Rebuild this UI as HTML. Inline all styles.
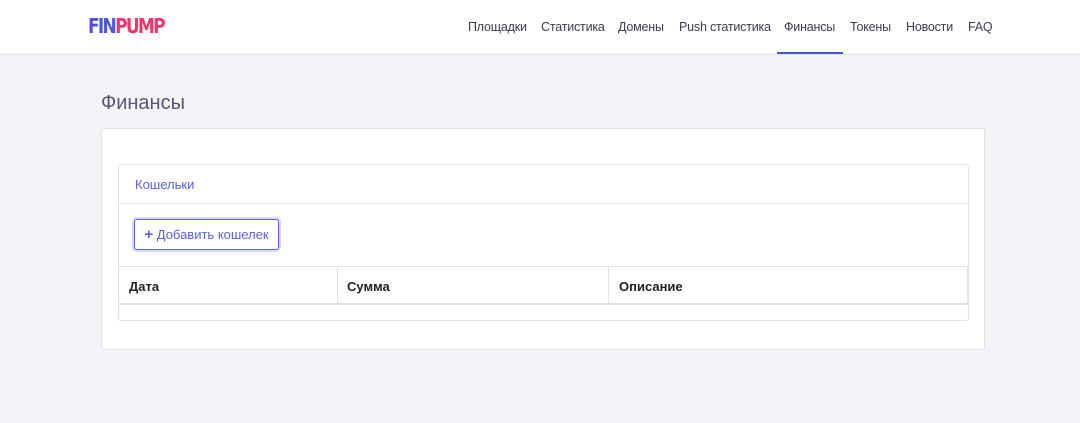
<!DOCTYPE html><html><head><meta charset="utf-8"><style>
body{margin:0;width:1080px;height:423px;background:#f3f4f8;font-family:"Liberation Sans",sans-serif;position:relative;overflow:hidden}
.hdr{position:absolute;left:0;top:0;width:1080px;height:54px;background:#fff;border-bottom:1px solid #e2e3e8}
.logo{position:absolute;left:88px;top:14px;font-weight:900;font-size:20px;letter-spacing:-2px;font-family:"DejaVu Sans",sans-serif;transform:scaleX(0.85);transform-origin:left}
.nav span{position:absolute;top:20px;font-size:12.5px;color:#3c3c55;letter-spacing:-0.2px}
.ul{position:absolute;left:777px;top:52px;width:66px;height:2px;background:#4a55c8}
h1{position:absolute;left:101px;top:92px;margin:0;font-size:20px;font-weight:normal;color:#57557a}
.card{position:absolute;background:#fff;border:1px solid #e1e2e6;border-radius:3px;box-sizing:border-box}
.abs{position:absolute}
</style></head><body>
<div class="hdr">
<div class="logo"><span style="color:#4b55d8">FIN</span><span style="color:#f0346c">PUMP</span></div>
<div class="nav">
<span style="left:468px">Площадки</span><span style="left:541px">Статистика</span><span style="left:618px">Домены</span><span style="left:679px">Push статистика</span><span style="left:784px">Финансы</span><span style="left:850px">Токены</span><span style="left:906px">Новости</span><span style="left:968px">FAQ</span>
</div><div class="ul"></div></div>
<h1>Финансы</h1>
<div class="card" style="left:101px;top:128px;width:884px;height:222px"></div>
<div class="card" style="left:118px;top:164px;width:851px;height:157px"></div>
<div class="abs" style="left:119px;top:203px;width:849px;height:1px;background:#e4e5ea"></div>
<div class="abs" style="left:135px;top:177px;font-size:13px;color:#5a5fd6">Кошельки</div>
<div class="abs" style="left:134px;top:219px;width:145px;height:31px;box-sizing:border-box;border:1px solid #5a62e0;border-radius:3px;box-shadow:0 0 0 2px #d6d9fb;font-size:13px;color:#5a5fd6;line-height:29px;text-align:center"><b style="font-size:15px">+</b> Добавить кошелек</div>
<div class="abs" style="left:118px;top:266px;width:850px;height:39px;border-top:1px solid #e1e2e6;border-bottom:2px solid #dcdde2;box-sizing:border-box"></div>
<div class="abs" style="left:118px;top:266px;width:1px;height:39px;background:#e1e2e6"></div>
<div class="abs" style="left:337px;top:266px;width:1px;height:39px;background:#e1e2e6"></div>
<div class="abs" style="left:608px;top:266px;width:1px;height:39px;background:#e1e2e6"></div>
<div class="abs" style="left:967px;top:266px;width:1px;height:39px;background:#e1e2e6"></div>
<div class="abs" style="left:129px;top:279px;font-size:13px;font-weight:bold;color:#222">Дата</div>
<div class="abs" style="left:347px;top:279px;font-size:13px;font-weight:bold;color:#222">Сумма</div>
<div class="abs" style="left:619px;top:279px;font-size:13px;font-weight:bold;color:#222">Описание</div>
</body></html>
